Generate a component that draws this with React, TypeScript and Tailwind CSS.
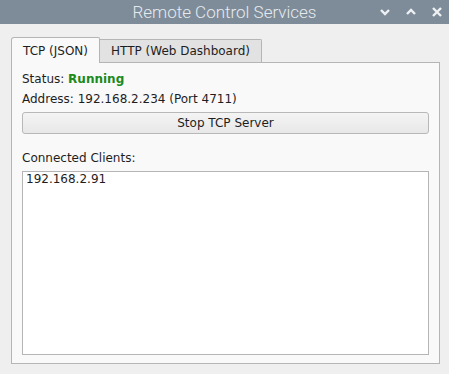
export default function App() {
  return (
    <div className="w-[449px] h-[374px] bg-[#efefef] flex flex-col font-['DejaVu_Sans',sans-serif] text-[12px] text-[#1e1e1e] overflow-hidden">
      {/* Title bar */}
      <div className="relative h-[24px] shrink-0 bg-[#7e8c99] flex items-center justify-center">
        <span className="font-['Roboto',sans-serif] font-light text-[17px] text-[#e6eaee] leading-none">
          Remote Control Services
        </span>
        <div className="absolute left-[379px] top-0 h-full flex items-center text-[#eef1f4]">
          <svg width="12" height="12" viewBox="0 0 12 12" className="mr-[14px]">
            <path d="M2 4 L6 8 L10 4" fill="none" stroke="currentColor" strokeWidth="2.4" />
          </svg>
          <svg width="12" height="12" viewBox="0 0 12 12" className="mr-[14px]">
            <path d="M2 8 L6 4 L10 8" fill="none" stroke="currentColor" strokeWidth="2.4" />
          </svg>
          <svg width="12" height="12" viewBox="0 0 12 12">
            <path d="M2 2 L10 10 M10 2 L2 10" fill="none" stroke="currentColor" strokeWidth="2.4" />
          </svg>
        </div>
      </div>

      {/* Tabs */}
      <div className="pl-[11px] pt-[13px] flex items-end">
        <div className="relative z-10 -mb-px h-[26px] w-[89px] bg-[#f9f9f9] border border-b-0 border-[#b5b5b5] rounded-tl-[3px] rounded-tr-[2px] flex items-center justify-center">
          TCP (JSON)
        </div>
        <div className="h-[23px] w-[163px] -ml-px bg-[#e2e2e2] border border-b-0 border-[#b5b5b5] rounded-tr-[2px] flex items-center justify-center">
          HTTP (Web Dashboard)
        </div>
      </div>

      {/* Panel */}
      <div className="ml-[11px] w-[429px] h-[302px] bg-[#f9f9f9] border border-[#b5b5b5] px-[10px] pt-[6px] flex flex-col">
        <div className="h-[20px] flex items-center">
          Status:&nbsp;<span className="font-bold text-[#1b8a1b]">Running</span>
        </div>
        <div className="h-[20px] flex items-center">Address: 192.168.2.234 (Port 4711)</div>
        <button className="mt-[3px] h-[22px] w-full bg-gradient-to-b from-[#f4f4f4] to-[#e8e8e8] border border-[#b8b8b8] rounded-[3px] flex items-center justify-center text-[12px] text-[#1e1e1e]">
          Stop TCP Server
        </button>
        <div className="mt-[14px] h-[20px] flex items-center">Connected Clients:</div>
        <div className="mt-[3px] h-[184px] bg-white border border-[#b5b5b5] px-[3px]">
          <div className="h-[14px] flex items-center">192.168.2.91</div>
        </div>
      </div>
    </div>
  );
}
